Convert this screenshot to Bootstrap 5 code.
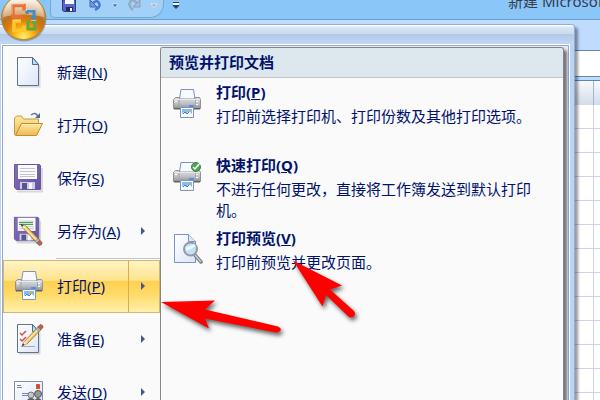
<!DOCTYPE html>
<html lang="zh-CN">
<head>
<meta charset="utf-8">
<meta name="viewport" content="width=device-width, initial-scale=1">
<title>新建 Microsoft Excel</title>
<link href="https://cdn.jsdelivr.net/npm/bootstrap@5.3.0/dist/css/bootstrap.min.css" rel="stylesheet">
<style>
body{font:15px/20px "Noto Sans","Noto Sans CJK SC",sans-serif;color:#00126b;background:#bfdbff}
button{font:inherit;color:inherit;background:none;border:0;padding:0;text-align:left}
.app-title{height:20px;background:#8bc6f9;border-bottom:1px solid #6b9cd0;color:#33404f}
.quick-bar{height:18px;margin-left:50px;padding-left:11px;width:114px;background:#a3d0f7;border:1px solid #7ba5d3;border-top:0;border-radius:0 0 14px 5px}
.quick-bar button{display:flex}
.more-tools{margin-left:8px}
.doc-name{width:92px;height:16px;line-height:2px;overflow:hidden}
.ribbon-gap{height:30px}
.formula-row{height:27px;background:#fff;border-top:1px solid #5b86b8;border-bottom:1px solid #5b86b8}
.col-heads{height:26px;margin-top:3px;border-top:1px solid #5b86b8;border-bottom:1px solid #9eb6ce;background:linear-gradient(#f8fafc,#d3dcea)}
.cells{margin-top:-1px;background:linear-gradient(90deg,transparent 18px,#ccd5e6 18px,#ccd5e6 19px,transparent 19px) 100% 0/25px 100% no-repeat,repeating-linear-gradient(#fff 0 23px,#ccd5e6 23px 24px)}
.head-line{width:7px;border-left:1px solid #9eb6ce}
.office-menu{position:absolute;top:24px;left:0;right:25px;bottom:0;border:solid #91aed6;border-width:1px 1px 0 0;border-top-right-radius:4px;background:#bcd3f2;box-shadow:3px 3px 3px #0006}
.menu-top{height:20px;background:linear-gradient(#fff 0 1px,#dae6f5 2px,#c9d9ef 9px,#b2c8e6 9px,#c3d8f3);border-top-right-radius:3px}
.menu-frame{margin:0 5px 0 2px;border:solid #8fa9d2;border-width:1px 1px 0 1px;background:#e9eaee;box-shadow:0 0 0 1px #fff}
.menu-list{width:157px;background:#fafafa}
.menu-item{display:flex;align-items:center;height:53px;width:100%;padding:0 0 2px 10px}
.menu-item svg{flex:none}
.menu-item .item-name{margin-left:12px;width:84px}
.item-sep{height:2px;margin-left:53px;border-top:1px solid #c5c5c5;background:#fff}
.chosen{border:1px solid #cfb875;padding:0 0 0 9px;background:linear-gradient(#fff4c4,#ffe38d 38%,#ffd04d 39%,#ffda68 65%,#fff0ad)}
.chosen > svg,.chosen .item-name{margin-bottom:2px}
.chosen .item-name{width:71px}
.chosen .arrow-half{height:100%;padding:0 0 2px 12px;border-left:1px solid #d8ae4c;display:flex;align-items:center}
.sub-panel{margin:1px 4px 0 0;border:solid #858585;border-width:1px 1px 0 1px;border-radius:3px 3px 0 0;background:#fafafa;box-shadow:inset 1px 1px #fff,3px 3px 3px #76727b}
.sub-title{height:30px;line-height:28px;padding-left:8px;font-size:15px;font-weight:700;background:#dde7ee;border-bottom:1px solid #c5c5c5;margin:0;border-radius:3px 3px 0 0}
.sub-item{display:flex;width:100%;min-height:73px;padding:3px 24px 0 10px;gap:13px}
.sub-item svg{flex:none;margin-top:7px}
.sub-item strong,.sub-item .detail{display:block}
.sub-item strong{line-height:22px}
.sub-item .detail{line-height:21px;margin-top:3px}
.pointers,.orb{position:absolute;top:0;left:0;pointer-events:none}
.pointers g{filter:drop-shadow(2px 3px 2px #0009)}
</style>
<script src="https://cdn.jsdelivr.net/npm/bootstrap@5.3.0/dist/js/bootstrap.bundle.min.js"></script>
</head>
<body class="vh-100 overflow-hidden position-relative d-flex flex-column">
<svg width="0" height="0" class="position-absolute" aria-hidden="true">
<defs>
<linearGradient id="paper" x1="0" y1="0" x2="1" y2="1"><stop stop-color="#fff"/><stop offset="1" stop-color="#dce5f7"/></linearGradient>
<linearGradient id="metal" x1="0" y1="0" x2="0" y2="1"><stop stop-color="#dedede"/><stop offset=".5" stop-color="#c3c4c8"/><stop offset="1" stop-color="#8f9197"/></linearGradient>
<linearGradient id="fold" x1="0" y1="0" x2="0" y2="1"><stop stop-color="#ffe9a2"/><stop offset="1" stop-color="#efb84e"/></linearGradient>
<linearGradient id="violet" x1="0" y1="0" x2="1" y2="1"><stop stop-color="#8570bd"/><stop offset="1" stop-color="#6650a5"/></linearGradient>
<radialGradient id="gold" cx=".5" cy=".95" r=".9"><stop stop-color="#fff27a"/><stop offset=".2" stop-color="#ffc21c"/><stop offset=".45" stop-color="#dd7d08"/><stop offset=".65" stop-color="#b77025"/><stop offset="1" stop-color="#e9d8bd"/></radialGradient>
<linearGradient id="gloss" x1="0" y1="0" x2="0" y2="1"><stop stop-color="#fff" stop-opacity=".95"/><stop offset="1" stop-color="#f1dcbd" stop-opacity=".45"/></linearGradient>
<symbol id="page" viewBox="0 0 32 32"><path d="M6 30.500h20.500V9" fill="none" stroke="#0002" stroke-width="2"/><path d="M4.500 1.500h15l6 7v21h-21z" fill="url(#paper)" stroke="#62738f"/><path d="M19.500 1.500v7h6z" fill="#c1dced" stroke="#506c8c"/></symbol>
<symbol id="printer" viewBox="0 0 32 32"><path d="M8.500 11l1.500-9.500h12.500l1.500 9.500z" fill="#f8faff" stroke="#7d94ba"/><path d="M4.500 9.500h4v2h15.500v-2h4.500l1 2v9h-27v-9z" fill="url(#metal)" stroke="#909196"/><path d="M3 11.500h26" stroke="#e9e9e9"/><path d="M8 12v7M24.500 12v7" stroke="#a3a4a8"/><path d="M26 13v1M26 16v1M5 13v1" stroke="#fff" stroke-width="2"/><path d="M3 20h26v1.500H3z" fill="#606169"/><path d="M9.500 19.500h13v10h-13z" fill="#f4f9ff" stroke="#8295b2"/><path d="M11 21h10v7H11z" fill="#7fc0f0"/><path d="M11 28v-2l2-2 2 2 3-3 3 3v2z" fill="#fff"/><path d="M12 26l2-2 2 2 2-2" fill="none" stroke="#3a7bc3"/><path d="M17 22h2v2h-2z" fill="#f59b56"/><path d="M18 18h5" stroke="#4b8ff1" stroke-width="2"/></symbol>
<symbol id="disk" viewBox="0 0 32 32"><path d="M4 29.500h25V6" fill="none" stroke="#0002" stroke-width="2"/><path d="M1.500 2.500h25l1 1v24h-24l-2-2z" fill="url(#violet)" stroke="#6a5a9c"/><path d="M5 3h19v14H5z" fill="#fafaff"/><path d="M7 6.500h15M7 9.500h15M7 12.500h15M7 14.500h15" stroke="#c3c4cb"/><path d="M7 20h15v7H7z" fill="#cbd0df"/><path d="M9 21h5v6H9z" fill="#5b5490"/><path d="M16 21h3v6h-3z" fill="#f7f7ff"/></symbol>
<symbol id="pencil" viewBox="0 0 32 32"><path d="M2 2l2.500 5.500L22 26l4-3.500L8 4z" fill="#efbd57" stroke="#785d36" stroke-width=".8"/><path d="M5 5l18 18.500" stroke="#ffe9a8" stroke-width="1.800"/><path d="M2 2l2.500 5.500L8 4z" fill="#ffe6be"/><path d="M1 1l1.500 4L5 3z" fill="#353535"/><path d="M20 24.500l4-4 2.500 2.500-4 4z" fill="#a6bcae" stroke="#59716c" stroke-width=".7"/><path d="M22.500 27l4-4 3 3q0 4-4 4z" fill="#c35c52" stroke="#863f38" stroke-width=".7"/></symbol>
<symbol id="chev" viewBox="0 0 5 8"><path d="M0 0l4 4-4 4z" fill="#46578e"/></symbol>
</defs></svg>

<header class="app-title d-flex align-items-start flex-shrink-0">
 <div class="quick-bar d-flex align-items-start">
  <button type="button" aria-label="保存"><svg width="15" height="13"><path d="M.5 0h13v11.500H2l-1.500-1z" fill="#5966cd" stroke="#353a88"/><path d="M3 0h9v4H3z" fill="#f6f9ff"/><path d="M4 7h7v4H4z" fill="#26295d"/><path d="M8 8h2v3H8z" fill="#fff"/></svg></button>
  <button type="button" class="ms-2 ps-1" aria-label="撤消"><svg width="14" height="13"><path d="M3 4q5-5 7-1 2 4-4 7" fill="none" stroke="#4878cf" stroke-width="2.500"/><path d="M1 0v7h7z" fill="#6f99e0" stroke="#3d68b4"/></svg></button>
  <button type="button" class="ms-2" aria-label="撤消列表"><svg width="8" height="9"><path d="M1 4h6L4 7.500z" fill="#3f6eab" stroke="#eef7ff" stroke-width=".6"/></svg></button>
  <button type="button" class="ms-2" aria-label="恢复"><svg width="15" height="13"><path d="M10 3Q5-2 3 2t3 8" fill="none" stroke="#91acc9" stroke-width="2.500"/><path d="M13 0v7H6z" fill="#a6bdd6" stroke="#839fbd"/></svg></button>
  <button type="button" class="ms-2" aria-label="恢复列表"><svg width="8" height="9"><path d="M1 4h6L4 7.500z" fill="#aaa5aa" stroke="#fff" stroke-width=".6"/></svg></button>
 </div>
 <button type="button" class="more-tools d-flex" aria-label="自定义"><svg width="9" height="12"><path d="M1 3.500h6" stroke="#fff" stroke-width="3"/><path d="M1 2.500h6M1 5.500h6L4 8.500z" stroke="#26456f" fill="#26456f"/></svg></button>
 <div class="doc-name ms-auto text-nowrap">新建 Microsoft</div>
</header>
<div class="ribbon-gap flex-shrink-0"></div>
<div class="formula-row flex-shrink-0"></div>
<div class="col-heads flex-shrink-0 d-flex justify-content-end"><div class="head-line"></div></div>
<div class="cells flex-grow-1"></div>

<main class="office-menu d-flex flex-column">
 <div class="menu-top flex-shrink-0"></div>
 <div class="menu-frame d-flex flex-grow-1">
  <nav class="menu-list flex-shrink-0" aria-label="文件">
   <button type="button" class="menu-item"><svg width="32" height="32"><use href="#page"/></svg><span class="item-name">新建(<u>N</u>)</span></button>
   <button type="button" class="menu-item"><svg width="32" height="32"><path d="M1.500 26V9l2-2h5l2 3h15v4" fill="url(#fold)" stroke="#c39b4a"/><path d="M2.500 26.500l6-12h21l-6 12z" fill="url(#fold)" stroke="#bd8c37"/><path d="M9 15.500h18" stroke="#fff3c7"/><path d="M18 6q5-4 7 2" fill="none" stroke="#617796" stroke-width="1.500"/><path d="M27 4v5h-5z" fill="#526d91"/></svg><span class="item-name">打开(<u>O</u>)</span></button>
   <button type="button" class="menu-item"><svg width="32" height="32"><use href="#disk"/></svg><span class="item-name">保存(<u>S</u>)</span></button>
   <button type="button" class="menu-item"><svg width="32" height="32"><use href="#disk" width="30" height="30"/><path d="M6 7.500h14M6 9.500h14" stroke="#3aa843"/><use href="#pencil" x="7" y="8" width="24" height="24"/></svg><span class="item-name">另存为(<u>A</u>)</span><svg width="5" height="8"><use href="#chev"/></svg></button>
   <div class="item-sep"></div>
   <button type="button" class="menu-item chosen"><svg width="32" height="32"><use href="#printer"/></svg><span class="item-name">打印(<u>P</u>)</span><span class="arrow-half"><svg width="5" height="8"><use href="#chev"/></svg></span></button>
   <button type="button" class="menu-item"><svg width="32" height="32"><use href="#page"/><path d="M7 10l2 2 4-4M7 16l2 2 4-4" fill="none" stroke="#d94a52" stroke-width="1.500"/><path d="M8 23.500h14" stroke="#9aaabd"/><g transform="translate(8 24) scale(.75 -.75)"><use href="#pencil" width="32" height="32"/></g></svg><span class="item-name">准备(<u>E</u>)</span><svg width="5" height="8"><use href="#chev"/></svg></button>
   <button type="button" class="menu-item"><svg width="32" height="32"><path d="M1.500 5.500h28v22h-28z" fill="url(#paper)" stroke="#818da1"/><path d="M4 9.500h4M4 11.500h5M9 17.500h7M9 19.500h7" stroke="#7289a8"/><path d="M23.500 8.500h3v4h-3z" fill="#dc4a28" stroke="#d0532f"/><circle cx="18" cy="19" r="3" fill="#c5c5c5" stroke="#777"/><circle cx="25" cy="18" r="3.500" fill="#999" stroke="#555"/><path d="M13 29q0-7 5-7t5 7zm8 0q0-7 4-7t5 7z" fill="#555d68"/><path d="M25 24h5v4h-5z" fill="#4ba83e"/></svg><span class="item-name">发送(<u>D</u>)</span><svg width="5" height="8"><use href="#chev"/></svg></button>
  </nav>
  <section class="sub-panel flex-grow-1">
   <h1 class="sub-title">预览并打印文档</h1>
   <button type="button" class="sub-item"><svg width="32" height="32"><use href="#printer"/></svg><span><strong>打印(<u>P</u>)</strong><span class="detail">打印前选择打印机、打印份数及其他打印选项。</span></span></button>
   <button type="button" class="sub-item"><svg width="32" height="32"><use href="#printer"/><circle cx="25" cy="6" r="4.500" fill="#4ca552" stroke="#3a8541"/><path d="M22 6l2 2 5-6" fill="none" stroke="#fff" stroke-width="1.500"/></svg><span><strong>快速打印(<u>Q</u>)</strong><span class="detail">不进行任何更改，直接将工作簿发送到默认打印机。</span></span></button>
   <button type="button" class="sub-item"><svg width="32" height="32"><path d="M3.500 .5h14l7 7v21h-21z" fill="url(#paper)" stroke="#7895c3"/><path d="M17.500 .5v7h7" fill="#dce8f5" stroke="#7895c3"/><path d="M24 21l6 7" stroke="#77787c" stroke-width="3.500" stroke-linecap="round"/><path d="M24 21l6 7" stroke="#cfd0d2" stroke-width="1.500"/><circle cx="19.500" cy="15" r="6.500" fill="#c1e3fa" stroke="#96999e" stroke-width="2"/><path d="M15 15q5-1 9-4" fill="none" stroke="#ecf8ff" stroke-width="3"/></svg><span><strong>打印预览(<u>V</u>)</strong><span class="detail">打印前预览并更改页面。</span></span></button>
  </section>
 </div>
</main>

<svg class="orb" width="50" height="45" aria-hidden="true"><circle cx="24" cy="19" r="22.500" fill="#5c4a3066"/><circle cx="23.500" cy="17.500" r="22" fill="url(#gold)" stroke="#b9852d"/><path d="M3 17a20.500 21 0 0 1 41 0q-20-5-41 0z" fill="url(#gloss)"/><g fill="none" stroke-width="3.500"><path d="M23 16.500h-10V5.500h11v5" stroke="#e8703a"/><path d="M27 11h7v7h-3M27 11v3" stroke="#3b8ed0" stroke-width="3"/><path d="M21 21.500h-7v9h10v-5" stroke="#ffc52e"/><path d="M28 20v9h7v-7h-3" stroke="#62a83f" stroke-width="3"/></g><path d="M12 14V4h12M26 9.500h9M13 20h8M31 20.500h5" fill="none" stroke="#ffffff80"/></svg>
<svg class="pointers" width="400" height="345" aria-hidden="true"><g fill="#f00"><path d="M161 302l54-1.500-10 9 73 17q4 2 2.500 4t-4.500 2l-71-14 4 10z"/><path d="M293 260.500l49 25-12 4 24 21.500q2 3 0 5t-5 1l-23-22-3.500 11.500z"/></g></svg>
</body>
</html>
